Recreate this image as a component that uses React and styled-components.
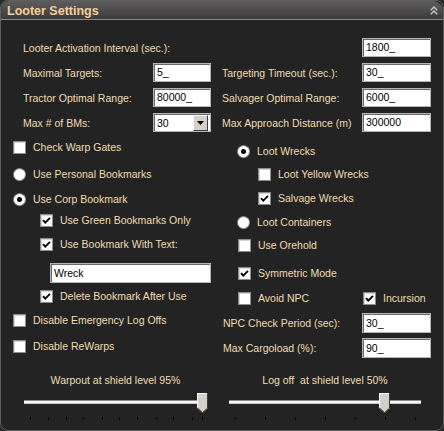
import React from "react";
import styled, { createGlobalStyle } from "styled-components";

const Global = createGlobalStyle`
  html, body { margin: 0; padding: 0; background: #2a2a2a; }
  body { font-family: "Liberation Sans", Arial, sans-serif; }
  * { box-sizing: border-box; }
`;

const Panel = styled.div`
  width: 444px;
  height: 431px;
  background: #232323;
  border: 1px solid #5e5e5e;
  border-radius: 8px;
  overflow: hidden;
  display: flex;
  flex-direction: column;
  color: #f2dcb0;
  font-size: 10.5px;
`;

const Header = styled.div`
  height: 19px;
  flex: none;
  display: flex;
  align-items: flex-end;
  justify-content: space-between;
  padding: 0 5px 1px 6px;
  background: linear-gradient(#5e5c5c, #3c3b3b);
  border-bottom: 1px solid #8a8a8a;
  border-radius: 7px 10px 0 0;
`;

const Title = styled.div`
  font-size: 12.5px;
  font-weight: bold;
  line-height: 14px;
  color: #f3d09a;
`;

const Collapse = styled.svg`
  width: 8px;
  height: 9px;
  align-self: center;
  margin-top: 1px;
`;

const FieldGrid = styled.div`
  margin: 18px 0 0 22px;
  display: grid;
  grid-template-columns: 130px 58px 11px 140px 69px;
  grid-auto-rows: 19px;
  row-gap: 6px;
  align-items: center;
`;

const Label = styled.span`
  grid-column: ${(p) => p.$col || "auto"};
  white-space: nowrap;
  line-height: 12px;
  padding-left: ${(p) => p.$pad || 0}px;
`;

const TextBox = styled.div`
  grid-column: ${(p) => p.$col || "auto"};
  width: ${(p) => p.$w || 69}px;
  height: ${(p) => p.$h || 19}px;
  background: #fff;
  border: 1px solid #b4b4b4;
  box-shadow: inset 1px 1px 0 #6a6a6a;
  color: #000;
  font-size: 10.5px;
  line-height: ${(p) => (p.$h || 19) - 2}px;
  padding-left: 3px;
  white-space: nowrap;
`;

const SelectBox = styled.div`
  grid-column: 2;
  width: 58px;
  height: 19px;
  background: #fff;
  border: 1px solid #b4b4b4;
  box-shadow: inset 1px 1px 0 #6a6a6a;
  color: #000;
  display: flex;
  align-items: center;
  justify-content: space-between;
  padding: 1px 2px 1px 3px;
`;

const DropButton = styled.div`
  width: 15px;
  height: 16px;
  background: #d4d0c8;
  border: 1px solid;
  border-color: #fff #404040 #404040 #fff;
  display: flex;
  align-items: center;
  justify-content: center;
`;

const Columns = styled.div`
  margin: 5px 0 0 12px;
  display: grid;
  grid-template-columns: 198px 209px;
  column-gap: 11px;
  align-items: start;
`;

const Column = styled.div`
  display: flex;
  flex-direction: column;
`;

const Row = styled.div`
  height: 20px;
  margin-top: ${(p) => p.$mt || 0}px;
  padding-left: ${(p) => p.$indent || 0}px;
  display: flex;
  align-items: center;
  gap: 7px;
  white-space: nowrap;
`;

const SplitRow = styled.div`
  height: 20px;
  margin-top: ${(p) => p.$mt || 0}px;
  display: grid;
  grid-template-columns: 140px 69px;
  align-items: center;
`;

const Box = styled.span`
  flex: none;
  width: 13px;
  height: 13px;
  background: #fff;
  border: 1px solid #8c8c8c;
  box-shadow: inset 1px 1px 0 #d6d6d6;
  display: flex;
  align-items: center;
  justify-content: center;
`;

const Radio = styled.span`
  flex: none;
  width: 13px;
  height: 13px;
  border-radius: 50%;
  background: #fff;
  border: 1px solid #9a9a9a;
  border-top-color: #7a7a7a;
  border-left-color: #7a7a7a;
  display: flex;
  align-items: center;
  justify-content: center;
  &::after {
    content: "";
    display: ${(p) => (p.$on ? "block" : "none")};
    width: 5px;
    height: 5px;
    border-radius: 50%;
    background: #000;
  }
`;

const CheckText = styled.span`
  line-height: 12px;
`;

const Sliders = styled.div`
  margin: 16px 0 0 23px;
  display: grid;
  grid-template-columns: 183px 192px;
  column-gap: 22px;
`;

const SliderBlock = styled.div`
  display: flex;
  flex-direction: column;
  align-items: center;
`;

const SliderLabel = styled.div`
  line-height: 12px;
  white-space: pre;
`;

const TrackArea = styled.div`
  position: relative;
  width: 100%;
  height: 20px;
  margin-top: 7px;
  display: flex;
  align-items: center;
`;

const TrackBar = styled.div`
  width: 100%;
  height: 4px;
  margin-top: -2px;
  background: #f4f4f4;
  border-top: 1px solid #8c8c8c;
  border-bottom: 1px solid #c8c8c8;
`;

const Thumb = styled.svg`
  position: absolute;
  top: 0;
  width: 11px;
  height: 20px;
`;

const TickRow = styled.div`
  position: relative;
  width: 100%;
  height: 3px;
  margin-top: 4px;
`;

const Tick = styled.span`
  position: absolute;
  top: 0;
  width: 1px;
  height: 3px;
  background: #000;
`;

const CheckMark = () => (
  <svg width="9" height="9" viewBox="0 0 9 9">
    <polyline points="1,4.2 3.3,6.6 8,1.8" fill="none" stroke="#000" strokeWidth="1.9" />
  </svg>
);

const Check = ({ on, label, indent, mt }) => (
  <Row $indent={indent} $mt={mt}>
    <Box>{on && <CheckMark />}</Box>
    <CheckText>{label}</CheckText>
  </Row>
);

const Option = ({ on, label, indent, mt }) => (
  <Row $indent={indent} $mt={mt}>
    <Radio $on={on} />
    <CheckText>{label}</CheckText>
  </Row>
);

const Slider = ({ label, thumb, ticks }) => (
  <SliderBlock>
    <SliderLabel>{label}</SliderLabel>
    <TrackArea>
      <TrackBar />
      <Thumb viewBox="0 0 11 20" style={{ left: thumb }}>
        <polygon points="0,0 11,0 11,15 5.5,20 0,15" fill="#d4d0c8" />
        <polyline points="0.5,15 0.5,0.5 10,0.5" fill="none" stroke="#fff" strokeWidth="1" />
        <polyline points="10.5,0 10.5,15 5.5,19.6 0.5,15" fill="none" stroke="#3a3a3a" strokeWidth="1" />
      </Thumb>
    </TrackArea>
    <TickRow>
      {ticks.map((t) => (
        <Tick key={t} style={{ left: t }} />
      ))}
    </TickRow>
  </SliderBlock>
);

export default function App() {
  return (
    <>
      <Global />
      <Panel>
        <Header>
          <Title>Looter Settings</Title>
          <Collapse viewBox="0 0 8 9">
            <polyline points="0.8,4.2 4,1 7.2,4.2" fill="none" stroke="#c4c4c4" strokeWidth="1.5" />
            <polyline points="0.8,8.2 4,5 7.2,8.2" fill="none" stroke="#c4c4c4" strokeWidth="1.5" />
          </Collapse>
        </Header>

        <FieldGrid>
          <Label $col="1 / 5">Looter Activation Interval (sec.):</Label>
          <TextBox $col="5">1800_</TextBox>

          <Label $col="1">Maximal Targets:</Label>
          <TextBox $col="2" $w={58}>5_</TextBox>
          <Label $col="4">Targeting Timeout (sec.):</Label>
          <TextBox $col="5">30_</TextBox>

          <Label $col="1">Tractor Optimal Range:</Label>
          <TextBox $col="2" $w={58}>80000_</TextBox>
          <Label $col="4">Salvager Optimal Range:</Label>
          <TextBox $col="5">6000_</TextBox>

          <Label $col="1">Max # of BMs:</Label>
          <SelectBox>
            <span>30</span>
            <DropButton>
              <svg width="7" height="4" viewBox="0 0 7 4">
                <polygon points="0,0 7,0 3.5,4" fill="#000" />
              </svg>
            </DropButton>
          </SelectBox>
          <Label $col="4">Max Approach Distance (m)</Label>
          <TextBox $col="5">300000</TextBox>
        </FieldGrid>

        <Columns>
          <Column>
            <Check label="Check Warp Gates" />
            <Option label="Use Personal Bookmarks" mt={7} />
            <Option on label="Use Corp Bookmark" mt={5} />
            <Check on label="Use Green Bookmarks Only" indent={27} mt={1} />
            <Check on label="Use Bookmark With Text:" indent={27} mt={4} />
            <Row $indent={37} $mt={9}>
              <TextBox $w={161} $h={20}>Wreck</TextBox>
            </Row>
            <Check on label="Delete Bookmark After Use" indent={27} mt={3} />
            <Check label="Disable Emergency Log Offs" mt={4} />
            <Check label="Disable ReWarps" mt={6} />
          </Column>
          <Column>
            <Option on label="Loot Wrecks" indent={15} mt={4} />
            <Check label="Loot Yellow Wrecks" indent={36} mt={3} />
            <Check on label="Salvage Wrecks" indent={36} mt={4} />
            <Option label="Loot Containers" indent={15} mt={4} />
            <Check label="Use Orehold" indent={16} mt={3} />
            <Check on label="Symmetric Mode" indent={16} mt={8} />
            <SplitRow $mt={5}>
              <Check label="Avoid NPC" indent={16} />
              <Check on label="Incursion" indent={1} />
            </SplitRow>
            <SplitRow $mt={5}>
              <Label $pad={1}>NPC Check Period (sec):</Label>
              <TextBox $h={20}>30_</TextBox>
            </SplitRow>
            <SplitRow $mt={5}>
              <Label $pad={1}>Max Cargoload (%):</Label>
              <TextBox $h={20}>90_</TextBox>
            </SplitRow>
          </Column>
        </Columns>

        <Sliders>
          <Slider
            label="Warpout at shield level 95%"
            thumb={173}
            ticks={[6, 24, 42, 59, 78, 95, 113, 132, 149, 168, 178]}
          />
          <Slider
            label="Log off  at shield level 50%"
            thumb={150}
            ticks={[6, 36, 66, 96, 126, 156, 186]}
          />
        </Sliders>
      </Panel>
    </>
  );
}
